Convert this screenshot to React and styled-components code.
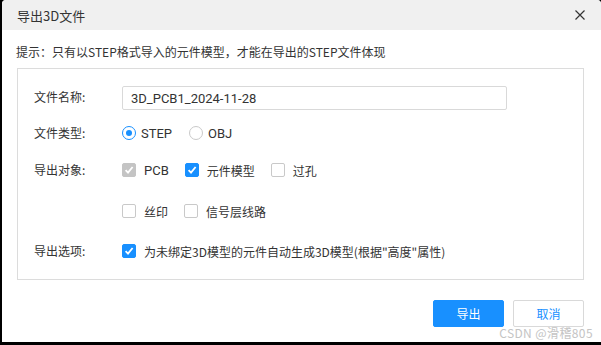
import React, { useState } from 'react';
import styled, { createGlobalStyle } from 'styled-components';

const GlobalStyle = createGlobalStyle`
    html, body {
        margin: 0;
        padding: 0;
        background: #000;
    }
    body {
        font-family: "Noto Sans CJK SC", "Noto Sans", sans-serif;
        font-size: 12px;
        color: #333;
    }
`;

const Screen = styled.div`
    position: relative;
    width: 601px;
    height: 345px;
    padding: 0 0 3px 2px;
    box-sizing: border-box;
    overflow: hidden;
`;

const Dialog = styled.div`
    display: flex;
    flex-direction: column;
    height: 100%;
    background: #fff;
    border-radius: 4px 4px 0 0;
    overflow: hidden;
`;

const TitleBar = styled.div`
    display: flex;
    align-items: center;
    justify-content: space-between;
    height: 30px;
    padding: 0 14px 0 15px;
    background: #f0f0f0;
    font-size: 13px;
    color: #333;
`;

const CloseButton = styled.button`
    display: flex;
    align-items: center;
    justify-content: center;
    width: 14px;
    height: 14px;
    padding: 0;
    border: none;
    background: none;
    cursor: pointer;
`;

const Body = styled.div`
    padding: 0 17px 0 15px;
`;

const Hint = styled.div`
    height: 38px;
    line-height: 44px;
    margin-left: -1px;
    color: #333;
`;

const Panel = styled.div`
    border: 1px solid #dcdcdc;
    padding: 17px 16px 18px 16px;
`;

const Row = styled.div`
    display: grid;
    grid-template-columns: 88px 1fr;
    align-items: start;
    margin-top: ${p => p.$gap || 0}px;
`;

const Label = styled.div`
    height: ${p => p.$h || 20}px;
    line-height: ${p => p.$h || 20}px;
    color: #333;
`;

const TextInput = styled.input`
    width: 385px;
    height: 24px;
    box-sizing: border-box;
    border: 1px solid #d9d9d9;
    border-radius: 2px;
    padding: 0 8px;
    font-family: "Roboto", "Noto Sans CJK SC", sans-serif;
    font-size: 13px;
    color: #333;
    outline: none;
`;

const Options = styled.div`
    display: flex;
    flex-direction: column;
    gap: 21px;
`;

const Line = styled.div`
    display: flex;
    align-items: center;
    height: 20px;
    gap: ${p => p.$gap || 16}px;
`;

const Choice = styled.label`
    display: flex;
    align-items: center;
    gap: ${p => p.$gap || 8}px;
    cursor: pointer;
    color: #333;
`;

const RadioDot = styled.span`
    position: relative;
    width: 14px;
    height: 14px;
    box-sizing: border-box;
    border-radius: 50%;
    border: 1px solid ${p => (p.$on ? '#1890ff' : '#c9c9c9')};
    background: #fff;
    &::after {
        content: '';
        position: absolute;
        left: 3px;
        top: 3px;
        width: 6px;
        height: 6px;
        border-radius: 50%;
        background: #1890ff;
        display: ${p => (p.$on ? 'block' : 'none')};
    }
`;

const Box = styled.span`
    display: flex;
    align-items: center;
    justify-content: center;
    width: 14px;
    height: 14px;
    box-sizing: border-box;
    border-radius: 2px;
    border: 1px solid ${p => (p.$disabled ? '#c4c4c4' : p.$on ? '#1890ff' : '#c9c9c9')};
    background: ${p => (p.$disabled ? '#c4c4c4' : p.$on ? '#1890ff' : '#fff')};
`;

const Latin = styled.span`
    font-family: "Roboto", "Noto Sans CJK SC", sans-serif;
    font-size: 13px;
`;

const Footer = styled.div`
    display: flex;
    justify-content: flex-end;
    gap: 9px;
    padding: 20px 17px 0 0;
`;

const Button = styled.button`
    width: 71px;
    height: 27px;
    border-radius: 2px;
    font-family: "Noto Sans CJK SC", sans-serif;
    font-size: 12px;
    cursor: pointer;
    border: 1px solid ${p => (p.$primary ? '#1890ff' : '#d9d9d9')};
    background: ${p => (p.$primary ? '#1890ff' : '#fff')};
    color: ${p => (p.$primary ? '#fff' : '#1890ff')};
`;

const Watermark = styled.div`
    position: absolute;
    right: 8px;
    bottom: 4px;
    font-family: "Noto Sans CJK SC", sans-serif;
    font-size: 12px;
    color: #c4c4c4;
    letter-spacing: 0.4px;
`;

const Check = () => (
    <svg width="10" height="10" viewBox="0 0 10 10">
        <path d="M1.6 5.2 L4 7.6 L8.6 2" fill="none" stroke="#fff" strokeWidth="1.8" />
    </svg>
);

const CheckItem = ({ on, disabled, children, onToggle }) => (
    <Choice onClick={disabled ? undefined : onToggle}>
        <Box $on={on} $disabled={disabled}>{on && <Check />}</Box>
        {children}
    </Choice>
);

const App = () => {
    const [type, setType] = useState('STEP');
    const [checks, setChecks] = useState({ model: true, via: false, silk: false, signal: false, auto: true });
    const toggle = key => () => setChecks(c => ({ ...c, [key]: !c[key] }));

    return (
        <Screen>
            <GlobalStyle />
            <Dialog>
                <TitleBar>
                    <span>导出3D文件</span>
                    <CloseButton aria-label="关闭">
                        <svg width="10" height="10" viewBox="0 0 10 10">
                            <path d="M0.5 0.5 L9.5 9.5 M9.5 0.5 L0.5 9.5" stroke="#333" strokeWidth="1.2" />
                        </svg>
                    </CloseButton>
                </TitleBar>
                <Body>
                    <Hint>提示：只有以STEP格式导入的元件模型，才能在导出的STEP文件体现</Hint>
                    <Panel>
                        <Row>
                            <Label $h={22}>文件名称:</Label>
                            <TextInput defaultValue="3D_PCB1_2024-11-28" />
                        </Row>
                        <Row $gap={13}>
                            <Label>文件类型:</Label>
                            <Line $gap={17}>
                                <Choice $gap={5} onClick={() => setType('STEP')}>
                                    <RadioDot $on={type === 'STEP'} />
                                    <Latin>STEP</Latin>
                                </Choice>
                                <Choice $gap={5} onClick={() => setType('OBJ')}>
                                    <RadioDot $on={type === 'OBJ'} />
                                    <Latin>OBJ</Latin>
                                </Choice>
                            </Line>
                        </Row>
                        <Row $gap={17}>
                            <Label>导出对象:</Label>
                            <Options>
                                <Line>
                                    <CheckItem on disabled><Latin>PCB</Latin></CheckItem>
                                    <CheckItem on={checks.model} onToggle={toggle('model')}>元件模型</CheckItem>
                                    <CheckItem on={checks.via} onToggle={toggle('via')}>过孔</CheckItem>
                                </Line>
                                <Line>
                                    <CheckItem on={checks.silk} onToggle={toggle('silk')}>丝印</CheckItem>
                                    <CheckItem on={checks.signal} onToggle={toggle('signal')}>信号层线路</CheckItem>
                                </Line>
                            </Options>
                        </Row>
                        <Row $gap={20}>
                            <Label>导出选项:</Label>
                            <Line>
                                <CheckItem on={checks.auto} onToggle={toggle('auto')}>
                                    为未绑定3D模型的元件自动生成3D模型(根据"高度"属性)
                                </CheckItem>
                            </Line>
                        </Row>
                    </Panel>
                </Body>
                <Footer>
                    <Button $primary>导出</Button>
                    <Button>取消</Button>
                </Footer>
            </Dialog>
            <Watermark>CSDN @滑稽805</Watermark>
        </Screen>
    );
};

export default App;
